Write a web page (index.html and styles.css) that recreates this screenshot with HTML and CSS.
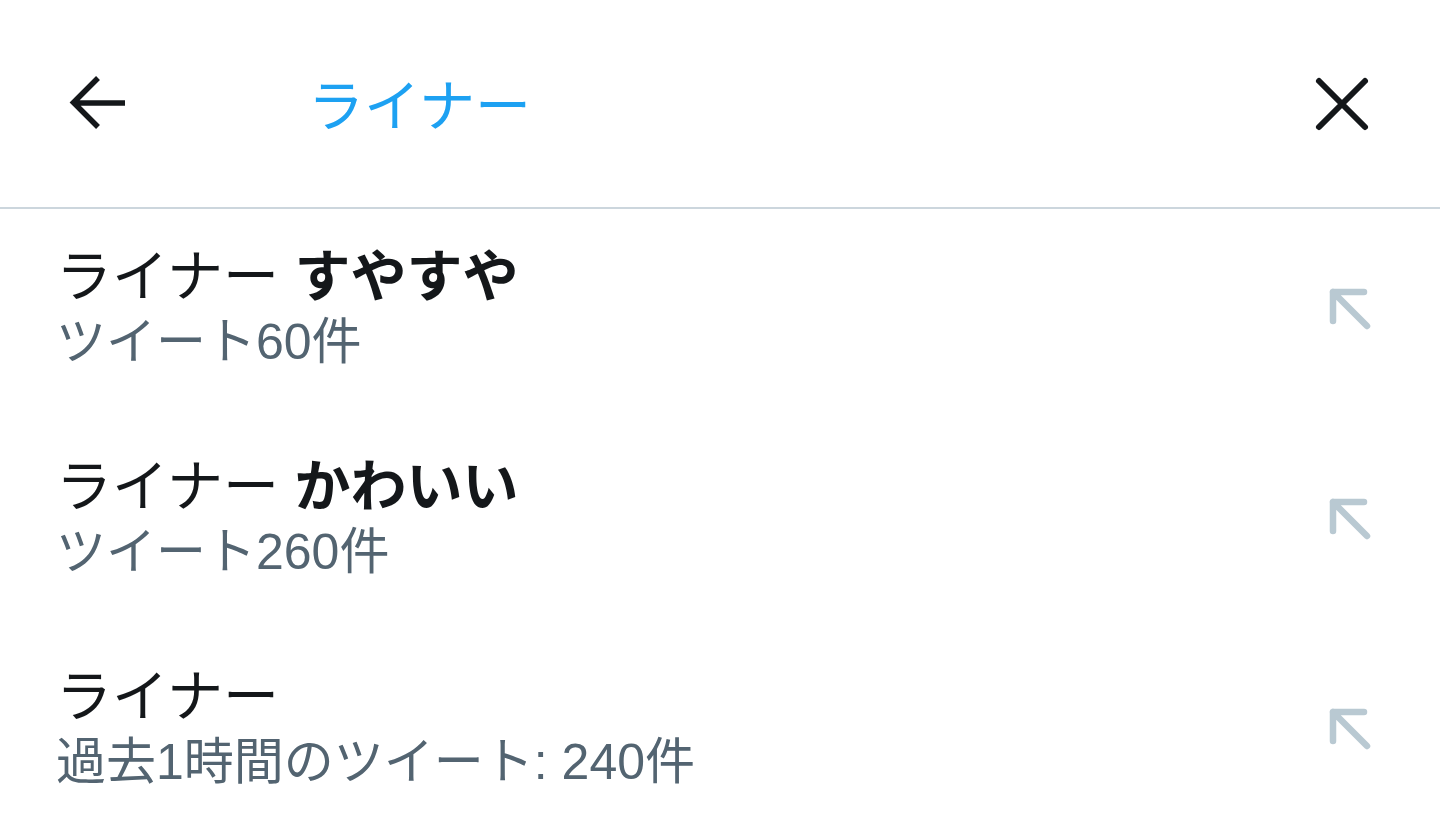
FILE: index.html
```html
<!DOCTYPE html>
<html lang="ja">
<head>
<meta charset="utf-8">
<title>ライナー</title>
<link rel="stylesheet" href="styles.css">
</head>
<body>
<div class="screen">
  <header class="topbar">
    <button class="icon-btn back" aria-label="戻る">
      <svg width="64" height="64" viewBox="0 0 64 64">
        <path d="M61 31H10M34 6L9.5 30.5L34 55" fill="none" stroke="#14171a" stroke-width="5.5" stroke-linecap="butt" stroke-linejoin="miter"/>
      </svg>
    </button>
    <div class="query">ライナー</div>
    <button class="icon-btn close" aria-label="閉じる">
      <svg width="60" height="60" viewBox="0 0 60 60">
        <path d="M7 7L53 53M53 7L7 53" fill="none" stroke="#14171a" stroke-width="6" stroke-linecap="round"/>
      </svg>
    </button>
  </header>
  <ul class="suggestions">
    <li class="item">
      <div class="texts">
        <div class="title">ライナー <b>すやすや</b></div>
        <div class="sub">ツイート60件</div>
      </div>
      <svg class="fill-arrow" width="46" height="46" viewBox="0 0 46 46"><path d="M6 35V6H37M6 6L40 40" fill="none" stroke="#b9c9d2" stroke-width="6.5" stroke-linecap="round" stroke-linejoin="round"/></svg>
    </li>
    <li class="item">
      <div class="texts">
        <div class="title">ライナー <b>かわいい</b></div>
        <div class="sub">ツイート260件</div>
      </div>
      <svg class="fill-arrow" width="46" height="46" viewBox="0 0 46 46"><path d="M6 35V6H37M6 6L40 40" fill="none" stroke="#b9c9d2" stroke-width="6.5" stroke-linecap="round" stroke-linejoin="round"/></svg>
    </li>
    <li class="item">
      <div class="texts">
        <div class="title">ライナー</div>
        <div class="sub">過去1時間のツイート: 240件</div>
      </div>
      <svg class="fill-arrow" width="46" height="46" viewBox="0 0 46 46"><path d="M6 35V6H37M6 6L40 40" fill="none" stroke="#b9c9d2" stroke-width="6.5" stroke-linecap="round" stroke-linejoin="round"/></svg>
    </li>
  </ul>
</div>
</body>
</html>
```
FILE: styles.css
```css
* { box-sizing: border-box; }
html, body {
  margin: 0;
  padding: 0;
  background: #ffffff;
}
body {
  font-family: "Liberation Sans", "Noto Sans CJK JP", sans-serif;
  color: #14171a;
}
.screen {
  width: 1440px;
  height: 838px;
  overflow: hidden;
}
.topbar {
  height: 209px;
  display: flex;
  align-items: center;
  border-bottom: 2px solid #ccd6dd;
  padding: 0 68px 0 64px;
}
.icon-btn {
  background: none;
  border: 0;
  padding: 0;
  margin: 0;
  display: flex;
  align-items: center;
  justify-content: center;
  cursor: pointer;
}
.back { width: 64px; height: 64px; }
.query {
  flex: 1;
  margin-left: 180px;
  padding-top: 6px;
  font-size: 56px;
  font-weight: 400;
  line-height: 64px;
  color: #1da1f2;
}
.close { width: 60px; height: 60px; }
.suggestions {
  list-style: none;
  margin: 0;
  padding: 0;
}
.item {
  height: 210px;
  display: flex;
  align-items: center;
  padding: 0 67px 0 56px;
}
.texts {
  flex: 1;
  padding-bottom: 10px;
}
.title {
  font-size: 56px;
  font-weight: 400;
  line-height: 66px;
  color: #14171a;
  white-space: nowrap;
}
.title b { font-weight: 700; }
.sub {
  font-size: 50px;
  font-weight: 400;
  line-height: 64px;
  color: #536471;
  white-space: nowrap;
}
.fill-arrow {
  margin-bottom: 10px;
}
```
